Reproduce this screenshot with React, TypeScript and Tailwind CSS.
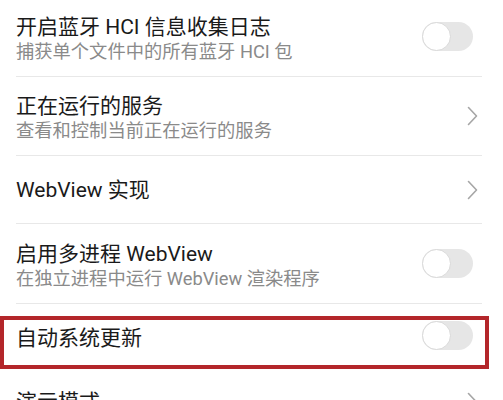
const rows = [
  { title: '开启蓝牙 HCI 信息收集日志', sub: '捕获单个文件中的所有蓝牙 HCI 包', kind: 'toggle', h: 'h-[80px]' },
  { title: '正在运行的服务', sub: '查看和控制当前正在运行的服务', kind: 'chevron', h: 'h-[79px]' },
  { title: 'WebView 实现', kind: 'chevron', h: 'h-[68px]' },
  { title: '启用多进程 WebView', sub: '在独立进程中运行 WebView 渲染程序', kind: 'toggle', h: 'h-[80px]' },
  { title: '自动系统更新', kind: 'toggle', marked: true, h: 'h-[64px]' },
  { title: '演示模式', kind: 'chevron', h: 'h-[68px]' },
];

function Toggle() {
  return (
    <div className="mr-[9px] h-[29px] w-[51px] shrink-0 rounded-full bg-[#e6e6e6]">
      <div className="h-[29px] w-[29px] rounded-full border border-[#d9d9d9] bg-white" />
    </div>
  );
}

function Chevron() {
  return (
    <svg className="mr-[4px] shrink-0" width="11" height="20" viewBox="0 0 11 20" fill="none">
      <polyline points="1.5,1.5 9.5,10 1.5,18.5" stroke="#a6a6a6" strokeWidth="1.6" strokeLinecap="round" strokeLinejoin="round" />
    </svg>
  );
}

export default function App() {
  return (
    <div
      className="h-[400px] w-[503px] overflow-hidden bg-white"
      style={{ fontFamily: 'Roboto, "Noto Sans CJK SC", sans-serif' }}
    >
      <div className="-mt-[3px]">
        {rows.map((row, i) => (
          <div key={i} className="relative">
            <div
              className={
                'ml-4 mr-[21px] flex items-center justify-between border-b border-[#e8e8e8] ' + row.h
              }
            >
              <div className={'flex flex-col ' + (row.sub ? 'mt-[2px]' : row.marked ? 'mt-[4px]' : '')}>
                <div className="text-[21px] leading-[28px] text-[#1a1a1a]">{row.title}</div>
                {row.sub && <div className="text-[18.3px] leading-[22px] text-[#8a8a8a]">{row.sub}</div>}
              </div>
              {row.kind === 'toggle' ? <Toggle /> : <Chevron />}
            </div>
            {row.marked && (
              <div className="pointer-events-none absolute left-0 top-[12px] h-[53px] w-[489px] border-[4px] border-[#b3262a]" />
            )}
          </div>
        ))}
      </div>
    </div>
  );
}
